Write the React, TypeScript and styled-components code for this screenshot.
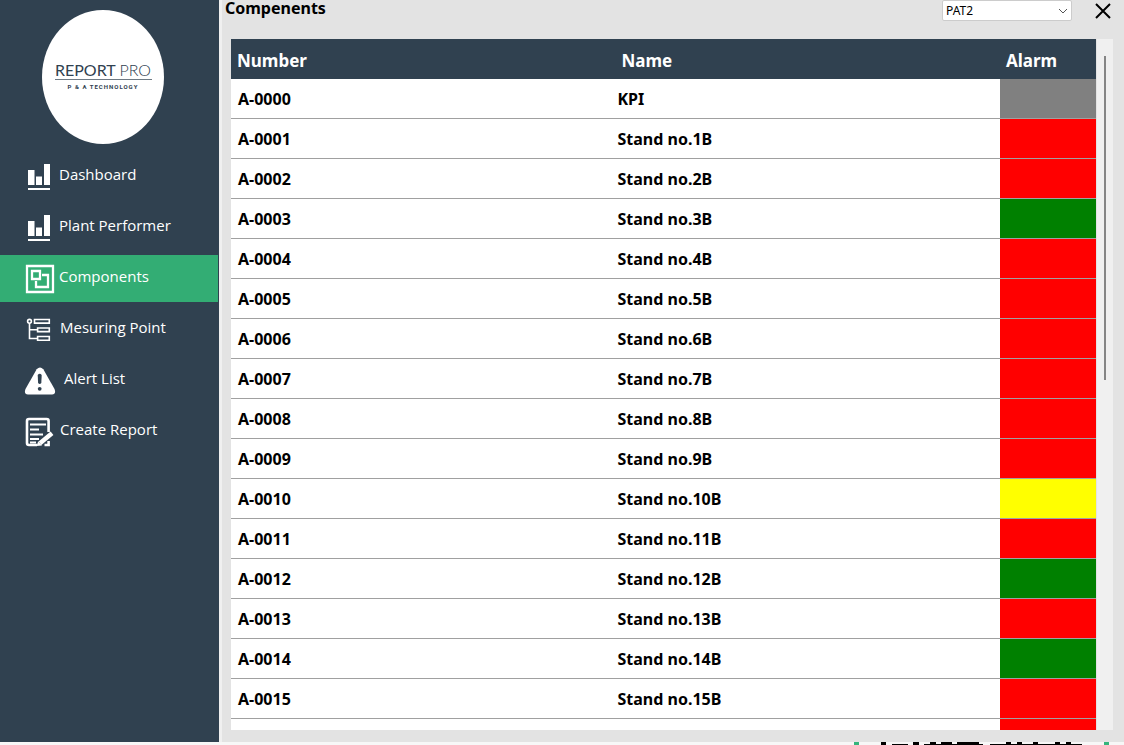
import React from "react";
import styled, { createGlobalStyle } from "styled-components";

const navy = "#304150";

const Global = createGlobalStyle`
  * { box-sizing: border-box; }
  body { margin: 0; background: #f7f7f7; font-family: "Noto Sans", sans-serif; }
`;

const Page = styled.div`
  display: flex;
  flex-direction: column;
  height: 100vh;
  overflow: hidden;
`;

const Shell = styled.div`
  display: flex;
  flex: 1;
  min-height: 0;
`;

const Sidebar = styled.aside`
  flex: 0 0 222px;
  padding-top: 10px;
  background: ${navy};
  border-right: 3px solid #f0f0f0;
`;

const Logo = styled.div`
  display: flex;
  flex-direction: column;
  align-items: center;
  width: 122px;
  height: 134px;
  margin: 0 auto 9px 42px;
  padding-top: 51px;
  border-radius: 50%;
  background: #fff;
  color: ${navy};
`;

const LogoName = styled.div`
  width: 97px;
  border-bottom: 1px solid #6e7a84;
  font: 16px/18px Lato, sans-serif;
  text-align: center;
  white-space: nowrap;

  span { font-weight: 300; }
`;

const LogoTag = styled.div`
  font: bold 6px/14px Roboto, sans-serif;
  letter-spacing: 1px;
`;

const Nav = styled.nav`
  display: flex;
  flex-direction: column;
  gap: 4px;
`;

const NavItem = styled.a<{ $active?: boolean }>`
  display: flex;
  align-items: center;
  height: 47px;
  margin-right: 1px;
  padding-left: 24px;
  gap: 4px;
  background: ${(p) => (p.$active ? "#33ad74" : "transparent")};
  color: #fff;
  font: 15px/22px "Open Sans", sans-serif;
  text-decoration: none;

  span { padding-bottom: 6px; }
  svg { flex: none; }
`;

const Main = styled.main`
  display: flex;
  flex: 1;
  flex-direction: column;
  min-width: 0;
  padding: 0 11px 12px 9px;
  background: #e3e3e3;
`;

const TopBar = styled.header`
  display: flex;
  align-items: flex-start;
  height: 39px;
`;

const Title = styled.h1`
  flex: 1;
  margin: 0 0 0 -6px;
  font: bold 16px/16px "Noto Sans", sans-serif;
`;

const SelectBox = styled.div`
  display: grid;
  width: 130px;
  margin-right: 23px;
  align-items: center;

  > * { grid-area: 1 / 1; }
  svg { justify-self: end; margin-right: 4px; pointer-events: none; }
`;

const Select = styled.select`
  appearance: none;
  width: 100%;
  height: 21px;
  padding: 0 3px;
  border: 1px solid #ccc;
  border-radius: 2px;
  background: #fff;
  color: #000;
  font: 12px/18px "Noto Sans", sans-serif;
`;

const Close = styled.button`
  display: flex;
  margin: 3px 2px 0 0;
  padding: 0;
  border: 0;
  background: none;
`;

const Panel = styled.section`
  display: flex;
  flex: 1;
  min-height: 0;
`;

const Scroller = styled.div`
  flex: 1;
  overflow-y: auto;
  scrollbar-width: none;
  margin-right: 1px;
  background: #fff;
`;

const Track = styled.div`
  flex: 0 0 16px;
  padding: 17px 7px;
  background: #f0f0f0;
`;

const Thumb = styled.div`
  height: 324px;
  background: #858585;
`;

const Table = styled.table`
  width: 100%;
  table-layout: fixed;
  border-collapse: separate;
  border-spacing: 0;
`;

const Th = styled.th`
  height: 40px;
  padding: 3px 6px 0;
  background: ${navy};
  color: #fff;
  font: bold 17px/24px "Noto Sans", sans-serif;
  text-align: left;

  &:nth-child(3) { width: 96px; }
`;

const Td = styled.td<{ $fill?: string }>`
  height: 40px;
  padding: 0 7px;
  border-bottom: 1px solid #a0a0a0;
  background: ${(p) => p.$fill ?? "#fff"};
  font: bold 16px/22px "Noto Sans", sans-serif;

  &:nth-child(2) { padding-left: 2px; }
`;

const Footer = styled.footer`
  display: flex;
  flex: 0 0 3px;
  justify-content: flex-end;
  padding-right: 15px;
`;

const BarsIcon = () => (
  <svg width="31" height="31" viewBox="0 0 31 31" fill="#fff" aria-hidden="true">
    <path d="M4 9h6.500v15H4zM12 15.500h6v8.500h-6zM20 3h6v21h-6zM4 27h22v2H4z" />
  </svg>
);

const ComponentsIcon = () => (
  <svg width="31" height="31" viewBox="0 0 31 31" fill="none" stroke="#fff" strokeWidth="2.300" aria-hidden="true">
    <path d="M3 3h26v26H3zM8 8h8v8H8zM18 12h6v12H12v-6" />
  </svg>
);

const TreeIcon = () => (
  <svg width="32" height="31" viewBox="0 0 32 31" fill="none" stroke="#fff" strokeWidth="1.600" aria-hidden="true">
    <circle cx="5.500" cy="7.300" r="1.900" />
    <path d="M10.500 5.500h14.800v3.600H10.500zM13.600 14h11.700v3.600H13.600zM13.600 22.500h11.700v3.700H13.600zM5.500 9.300v15.200h8M5.500 15.800h8" />
  </svg>
);

const AlertIcon = () => (
  <svg width="36" height="31" viewBox="0 0 36 31" fill="#fff" aria-hidden="true">
    <path d="M12.700 4.300q3.300-3.800 6.600 0L30.500 24q2 5-2.500 5.500H4Q-.5 29 1.500 24z" />
    <path d="M13.700 10q2-2.500 4 0l-.4 8q-1.600 2-3.200 0z" fill={navy} />
    <circle cx="15.700" cy="23.800" r="1.900" fill={navy} />
  </svg>
);

const ReportIcon = () => (
  <svg width="32" height="31" viewBox="0 0 32 31" fill="none" stroke="#fff" aria-hidden="true">
    <path d="M24.600 16V5q0-2-2-2H5Q3 3 3 5v22q0 2 2 2h8M20.500 29h4.100v-4" strokeWidth="2.600" />
    <path d="M6 8.500h16M6 13.500h9M6 18.500h13M6 23h9M6 26.500h6" strokeWidth="2" />
    <path d="M16 27.200l12-10" strokeWidth="4.400" />
    <path d="M14.300 25.200L12.500 30l5.500-.5z" fill="#fff" stroke="none" />
  </svg>
);

const nav = [
  { label: "Dashboard", icon: <BarsIcon /> },
  { label: "Plant Performer", icon: <BarsIcon /> },
  { label: "Components", icon: <ComponentsIcon />, active: true },
  { label: "Mesuring Point", icon: <TreeIcon /> },
  { label: "Alert List", icon: <AlertIcon /> },
  { label: "Create Report", icon: <ReportIcon /> },
];

const alarms = [
  "gray", "red", "red", "green", "red", "red", "red", "red", "red",
  "red", "yellow", "red", "green", "red", "green", "red", "red",
];

export default function App() {
  return (
    <Page>
      <Global />
      <Shell>
        <Sidebar>
          <Logo>
            <LogoName>REPORT <span>PRO</span></LogoName>
            <LogoTag>P &amp; A TECHNOLOGY</LogoTag>
          </Logo>
          <Nav>
            {nav.map((n) => (
              <NavItem key={n.label} href="#" $active={n.active}>
                {n.icon}
                <span>{n.label}</span>
              </NavItem>
            ))}
          </Nav>
        </Sidebar>
        <Main>
          <TopBar>
            <Title>Compenents</Title>
            <SelectBox>
              <Select aria-label="Plant" defaultValue="PAT2">
                <option>PAT2</option>
              </Select>
              <svg width="10" height="6" viewBox="0 0 10 6" fill="none" stroke="#555" aria-hidden="true">
                <path d="M1 1l4 4 4-4" />
              </svg>
            </SelectBox>
            <Close aria-label="Close">
              <svg width="16" height="16" viewBox="0 0 16 16" stroke="#000" strokeWidth="2" aria-hidden="true">
                <path d="M1 1l14 14M15 1L1 15" />
              </svg>
            </Close>
          </TopBar>
          <Panel>
            <Scroller>
              <Table>
                <thead>
                  <tr><Th>Number</Th><Th>Name</Th><Th>Alarm</Th></tr>
                </thead>
                <tbody>
                  {alarms.map((color, i) => (
                    <tr key={i}>
                      <Td>{`A-${String(i).padStart(4, "0")}`}</Td>
                      <Td>{i === 0 ? "KPI" : `Stand no.${i}B`}</Td>
                      <Td $fill={color} aria-label={color} />
                    </tr>
                  ))}
                </tbody>
              </Table>
            </Scroller>
            <Track><Thumb /></Track>
          </Panel>
        </Main>
      </Shell>
      <Footer>
        <svg width="255" height="3" viewBox="0 0 255 3" aria-hidden="true">
          <path d="M0 0h5v3H0zM250 0h5v3h-5z" fill="#35b57c" />
          <path
            d="M27 0h5v3h-5zM38 2h16v1H38zM59 0h6v3h-6zM70 2h59v1H70zM76 0h6v2h-6zM87 0h11v2H87zM103 0h22v2h-22zM136 2h92v1h-92zM152 0h5v2h-5zM163 0h5v2h-5zM179 0h5v2h-5zM201 0h5v2h-5zM212 0h5v2h-5z"
            fill="#000"
          />
        </svg>
      </Footer>
    </Page>
  );
}
